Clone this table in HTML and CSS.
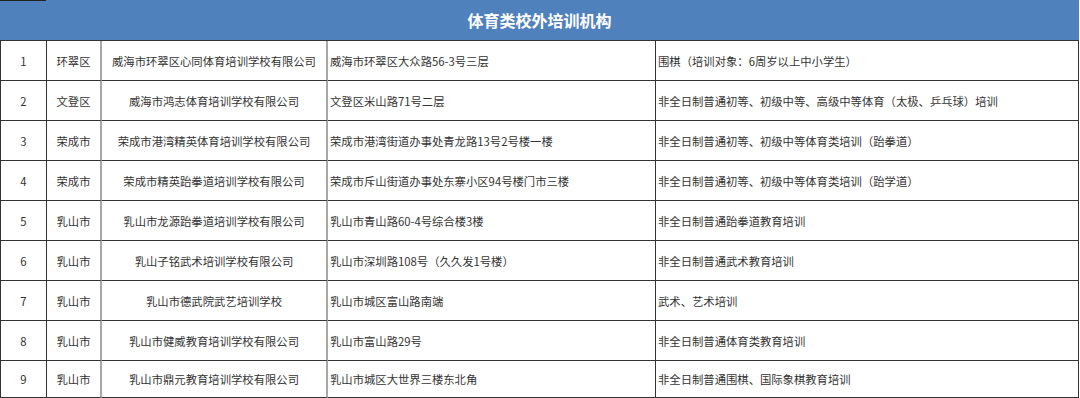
FILE: index.html
```html
<!DOCTYPE html>
<html lang="zh-CN">
<head>
<meta charset="utf-8">
<title>体育类校外培训机构</title>
<link rel="stylesheet" href="styles.css">
</head>
<body>
<div class="sheet">
  <div class="title">体育类校外培训机构</div>
  <div class="grid">
    <div class="row">
      <div class="c c1">1</div><div class="c c2">环翠区</div><div class="c c3">威海市环翠区心同体育培训学校有限公司</div><div class="c c4">威海市环翠区大众路56-3号三层</div><div class="c c5">围棋（培训对象：6周岁以上中小学生）</div>
    </div>
    <div class="row">
      <div class="c c1">2</div><div class="c c2">文登区</div><div class="c c3">威海市鸿志体育培训学校有限公司</div><div class="c c4">文登区米山路71号二层</div><div class="c c5">非全日制普通初等、初级中等、高级中等体育（太极、乒乓球）培训</div>
    </div>
    <div class="row">
      <div class="c c1">3</div><div class="c c2">荣成市</div><div class="c c3">荣成市港湾精英体育培训学校有限公司</div><div class="c c4">荣成市港湾街道办事处青龙路13号2号楼一楼</div><div class="c c5">非全日制普通初等、初级中等体育类培训（跆拳道）</div>
    </div>
    <div class="row">
      <div class="c c1">4</div><div class="c c2">荣成市</div><div class="c c3">荣成市精英跆拳道培训学校有限公司</div><div class="c c4">荣成市斥山街道办事处东寨小区94号楼门市三楼</div><div class="c c5">非全日制普通初等、初级中等体育类培训（跆学道）</div>
    </div>
    <div class="row">
      <div class="c c1">5</div><div class="c c2">乳山市</div><div class="c c3">乳山市龙源跆拳道培训学校有限公司</div><div class="c c4">乳山市青山路60-4号综合楼3楼</div><div class="c c5">非全日制普通跆拳道教育培训</div>
    </div>
    <div class="row">
      <div class="c c1">6</div><div class="c c2">乳山市</div><div class="c c3">乳山子铭武术培训学校有限公司</div><div class="c c4">乳山市深圳路108号（久久发1号楼）</div><div class="c c5">非全日制普通武术教育培训</div>
    </div>
    <div class="row">
      <div class="c c1">7</div><div class="c c2">乳山市</div><div class="c c3">乳山市德武院武艺培训学校</div><div class="c c4">乳山市城区富山路南端</div><div class="c c5">武术、艺术培训</div>
    </div>
    <div class="row">
      <div class="c c1">8</div><div class="c c2">乳山市</div><div class="c c3">乳山市健威教育培训学校有限公司</div><div class="c c4">乳山市富山路29号</div><div class="c c5">非全日制普通体育类教育培训</div>
    </div>
    <div class="row last">
      <div class="c c1">9</div><div class="c c2">乳山市</div><div class="c c3">乳山市鼎元教育培训学校有限公司</div><div class="c c4">乳山市城区大世界三楼东北角</div><div class="c c5">非全日制普通围棋、国际象棋教育培训</div>
    </div>
  </div>
</div>
</body>
</html>
```

FILE: styles.css
```css
html, body {
  margin: 0;
  padding: 0;
  background: #ffffff;
}

body {
  font-family: "Noto Sans CJK SC", "Noto Sans", sans-serif;
  color: #333333;
}

.sheet {
  width: 1079px;
}

.title {
  height: 40px;
  display: flex;
  align-items: center;
  justify-content: center;
  background: linear-gradient(#222222, #222222) no-repeat 0 0 / 46px 1px, #4f81bd;
  color: #ffffff;
  font-size: 16px;
  font-weight: 700;
}

.grid {
  border-top: 1px solid #333333;
  border-left: 1px solid #333333;
}

.row {
  display: grid;
  grid-template-columns: 46px 55px 226px 328px 423px;
  height: 40px;
}

.row.last {
  height: 37px;
}

.c {
  box-sizing: border-box;
  display: flex;
  align-items: center;
  font-size: 11.33px;
  line-height: 16px;
  white-space: nowrap;
  overflow: hidden;
  border-bottom: 1px solid #333333;
  border-right: 1px solid #333333;
}

.c1, .c2, .c3 {
  justify-content: center;
}

.c2, .c3 {
  border-right: 2px solid #a8a8a8;
}

.c4, .c5 {
  padding-left: 2px;
}
```
